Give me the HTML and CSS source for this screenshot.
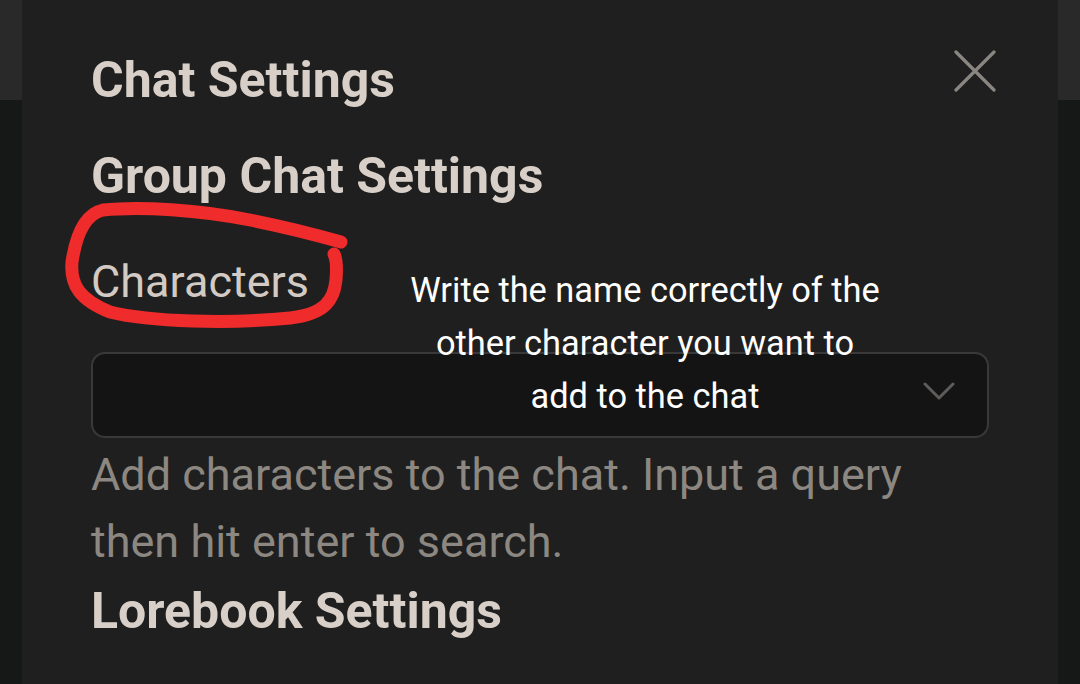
FILE: index.html
```html
<!DOCTYPE html>
<html lang="en">
<head>
<meta charset="utf-8">
<title>Chat Settings</title>
<link rel="stylesheet" href="styles.css">
</head>
<body>
<div class="screen">
  <div class="side side-left"><div class="side-top"></div></div>
  <div class="modal">
    <div class="modal-head">
      <h1 class="title">Chat Settings</h1>
      <button class="close" aria-label="Close">
        <svg width="42" height="42" viewBox="0 0 42 42"><path d="M2 2 L40 40 M40 2 L2 40" stroke="#8a8782" stroke-width="3.2" stroke-linecap="round" fill="none"/></svg>
      </button>
    </div>
    <h2 class="section">Group Chat Settings</h2>
    <div class="label">Characters</div>
    <div class="select">
      <svg class="chev" width="32" height="20" viewBox="0 0 32 20"><path d="M2 3 L16 17 L30 3" stroke="#5e5c5a" stroke-width="3" fill="none" stroke-linecap="round" stroke-linejoin="round"/></svg>
    </div>
    <p class="help">Add characters to the chat. Input a query then hit enter to search.</p>
    <h2 class="section lore">Lorebook Settings</h2>
  </div>
  <div class="side side-right"><div class="side-top"></div></div>

  <svg class="scribble" width="1080" height="684" viewBox="0 0 1080 684">
    <path d="M341 242 C 320 236, 290 228, 250 220 C 200 210, 140 206, 103 210 C 85 214, 76 235, 72 262 C 70 285, 80 300, 110 312 C 150 322, 230 324, 290 318 C 325 314, 334 300, 336 280 C 337 268, 336 258, 334 254" stroke="#ef2b2b" stroke-width="13" fill="none" stroke-linecap="round" stroke-linejoin="round"/>
  </svg>
  <div class="note">Write the name correctly of the<br>other character you want to<br>add to the chat</div>
</div>
</body>
</html>
```

FILE: styles.css
```css
* { box-sizing: border-box; }
html, body {
  margin: 0;
  padding: 0;
  width: 1080px;
  height: 684px;
  overflow: hidden;
  background: #161616;
  font-family: Roboto, "Noto Sans", Arial, sans-serif;
}
.screen {
  position: relative;
  width: 1080px;
  height: 684px;
  display: flex;
}
.side {
  width: 22px;
  flex: none;
  background: #161717;
}
.side-top {
  height: 100px;
  background: #292929;
}
.modal {
  flex: 1;
  background: #1f1f1f;
  padding: 50px 0 0 69px;
  display: flex;
  flex-direction: column;
}
.modal-head {
  display: flex;
  justify-content: space-between;
  align-items: flex-start;
  padding-right: 62px;
}
.title, .section {
  margin: 0;
  font-size: 50px;
  line-height: 60px;
  font-weight: 700;
  color: #d8d0c8;
}
.close {
  background: none;
  border: 0;
  padding: 0;
  margin-top: 0;
  width: 42px;
  height: 42px;
  cursor: pointer;
}
.close svg { display: block; }
.section { margin-top: 36px; }
.label {
  margin-top: 48px;
  font-size: 45px;
  line-height: 56px;
  color: #d3cbc3;
}
.select {
  margin-top: 42px;
  width: 898px;
  height: 86px;
  background: #141414;
  border: 2px solid #393939;
  border-radius: 14px;
  display: flex;
  align-items: center;
  justify-content: flex-end;
  padding-right: 32px;
}
.chev { display: block; margin-top: -8px; }
.help {
  margin: 3px 0 0 0;
  width: 898px;
  font-size: 45px;
  line-height: 67px;
  color: #8c8781;
}
.lore { margin-top: 6px; }
.scribble {
  position: absolute;
  left: 0;
  top: 0;
  pointer-events: none;
}
.note {
  position: absolute;
  left: 345px;
  top: 264px;
  width: 600px;
  text-align: center;
  font-size: 34.4px;
  line-height: 53px;
  color: #ffffff;
}
```
